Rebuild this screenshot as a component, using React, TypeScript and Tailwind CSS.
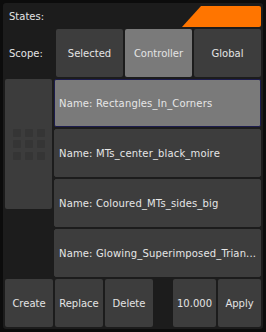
import React from "react";

const items = [
  "Name: Rectangles_In_Corners",
  "Name: MTs_center_black_moire",
  "Name: Coloured_MTs_sides_big",
  "Name: Glowing_Superimposed_Trian...",
];

function Btn({
  label,
  active,
  className,
}: {
  label: string;
  active?: boolean;
  className?: string;
}) {
  return (
    <div
      className={
        "flex items-center justify-center rounded-[2px] text-[10px] text-[#e4e4e4] " +
        (active ? "bg-[#7a7a7a] " : "bg-[#3d3d3d] ") +
        (className || "")
      }
    >
      {label}
    </div>
  );
}

function GridGrip() {
  return (
    <div className="grid grid-cols-3 gap-x-[4px] gap-y-[3.5px]">
      {Array.from({ length: 9 }).map((_, i) => (
        <div key={i} className="w-[8px] h-[8px] rounded-[1px] bg-[#353535]" />
      ))}
    </div>
  );
}

export default function App() {
  return (
    <div
      className="w-[266px] h-[332px] bg-[#0c0c0c] p-[3px]"
      style={{ fontFamily: '"DejaVu Sans", Verdana, sans-serif' }}
    >
      <div className="h-full bg-[#1c1c1c] rounded-[3px] px-[2px] flex flex-col">
        {/* header */}
        <div className="h-[26px] flex items-start justify-between">
          <span className="text-[10px] text-[#e4e4e4] pl-[4px] pt-[8px] leading-[12px]">
            States:
          </span>
          <svg width="80" height="21" viewBox="0 0 80 21" className="mt-[3px] -mr-[1px]">
            <path d="M0 21 L19 0 H77 Q79 0 79 2 V19 Q79 21 77 21 Z" fill="#ff7500" />
          </svg>
        </div>

        {/* scope */}
        <div className="h-[48px] flex items-center">
          <span className="w-[51px] pl-[4px] text-[10px] text-[#e4e4e4]">Scope:</span>
          <div className="flex gap-[2px] h-full">
            <Btn label="Selected" className="w-[67px]" />
            <Btn label="Controller" active className="w-[67px]" />
            <Btn label="Global" className="w-[67px]" />
          </div>
        </div>

        {/* list */}
        <div className="mt-[2px] flex gap-[2px]">
          <div className="w-[47px] h-[130px] bg-[#3c3c3c] rounded-[2px] flex items-center justify-center">
            <GridGrip />
          </div>
          <div className="flex flex-col gap-[2px] w-[207px]">
            {items.map((name, i) => (
              <div
                key={name}
                className={
                  "h-[48px] flex items-center pl-[4px] rounded-[2px] border text-[10px] tracking-[0.15px] text-[#e6e6e6] whitespace-nowrap overflow-hidden " +
                  (i === 0
                    ? "bg-[#7a7a7a] border-[#1c1c4e]"
                    : "bg-[#3d3d3d] border-[#3d3d3d]")
                }
              >
                {name}
              </div>
            ))}
          </div>
        </div>

        {/* actions */}
        <div className="mt-[2px] h-[48px] flex">
          <div className="flex gap-[2px]">
            <Btn label="Create" className="w-[48px]" />
            <Btn label="Replace" className="w-[48px]" />
            <Btn label="Delete" className="w-[48px]" />
          </div>
          <div className="ml-[20px] flex gap-[2px]">
            <Btn label="10.000" className="w-[43px]" />
            <Btn label="Apply" className="w-[43px]" />
          </div>
        </div>
      </div>
    </div>
  );
}
